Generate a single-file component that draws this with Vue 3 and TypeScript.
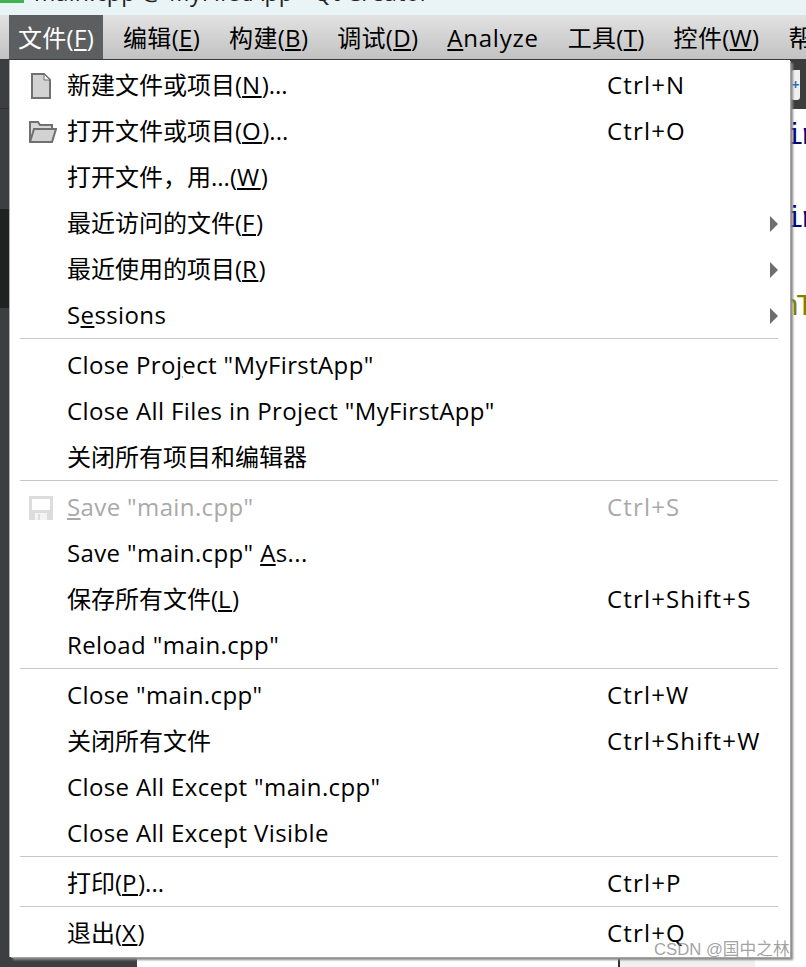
<script setup lang="ts">
type Row = { kind: 'item'; pre: string; key?: string; post?: string; shortcut?: string; icon?: string; arrow?: boolean; disabled?: boolean } | { kind: 'sep' }
const menus = [
  { pre: '文件(', key: 'F', post: ')', active: true },
  { pre: '编辑(', key: 'E', post: ')' },
  { pre: '构建(', key: 'B', post: ')' },
  { pre: '调试(', key: 'D', post: ')' },
  { pre: '', key: 'A', post: 'nalyze' },
  { pre: '工具(', key: 'T', post: ')' },
  { pre: '控件(', key: 'W', post: ')' },
  { pre: '帮助(', key: 'H', post: ')' },
]
const rows: Row[] = [
  { kind: 'item', pre: '新建文件或项目(', key: 'N', post: ')...', shortcut: 'Ctrl+N', icon: 'file' },
  { kind: 'item', pre: '打开文件或项目(', key: 'O', post: ')...', shortcut: 'Ctrl+O', icon: 'folder' },
  { kind: 'item', pre: '打开文件，用...(', key: 'W', post: ')' },
  { kind: 'item', pre: '最近访问的文件(', key: 'F', post: ')', arrow: true },
  { kind: 'item', pre: '最近使用的项目(', key: 'R', post: ')', arrow: true },
  { kind: 'item', pre: 'S', key: 'e', post: 'ssions', arrow: true },
  { kind: 'sep' },
  { kind: 'item', pre: 'Close Pro', key: 'j', post: 'ect "MyFirstApp"' },
  { kind: 'item', pre: 'Close All Files in Project "MyFirstApp"' },
  { kind: 'item', pre: '关闭所有项目和编辑器' },
  { kind: 'sep' },
  { kind: 'item', pre: '', key: 'S', post: 'ave "main.cpp"', shortcut: 'Ctrl+S', icon: 'save', disabled: true },
  { kind: 'item', pre: 'Save "main.cpp" ', key: 'A', post: 's...' },
  { kind: 'item', pre: '保存所有文件(', key: 'L', post: ')', shortcut: 'Ctrl+Shift+S' },
  { kind: 'item', pre: 'Reload "main.cpp"' },
  { kind: 'sep' },
  { kind: 'item', pre: 'Close "main.cpp"', shortcut: 'Ctrl+W' },
  { kind: 'item', pre: '关闭所有文件', shortcut: 'Ctrl+Shift+W' },
  { kind: 'item', pre: 'Close All Except "main.cpp"' },
  { kind: 'item', pre: 'Close All Except Visible' },
  { kind: 'sep' },
  { kind: 'item', pre: '打印(', key: 'P', post: ')...', shortcut: 'Ctrl+P' },
  { kind: 'sep' },
  { kind: 'item', pre: '退出(', key: 'X', post: ')', shortcut: 'Ctrl+Q' },
]
const isLatin = (s: string) => /^[\x00-\x7f]*$/.test(s)
</script>

<template>
  <div class="window">
    <header class="titlebar">
      <span class="appicon"></span>
      <span class="title">main.cpp @ MyFirstApp - Qt Creator</span>
    </header>
    <nav class="menubar">
      <span v-for="m in menus" :key="m.key" class="menu-title" :class="{ active: m.active, latin: isLatin(m.pre + m.post) }">{{ m.pre }}<u>{{ m.key }}</u>{{ m.post }}</span>
    </nav>
    <div class="workspace">
      <aside class="side">
        <div class="side-a"></div>
        <div class="side-c"></div>
        <div class="side-b"></div>
        <div class="side-d"></div>
      </aside>
      <main class="editor">
        <div class="tabs">
          <div class="tab"><span class="plus">+</span></div>
        </div>
        <div class="code">
          <div class="code-line l1">ir</div>
          <div class="code-line l2">ir</div>
          <div class="code-line l3">nT</div>
        </div>
        <div class="statusbar"><span class="status-cell"></span></div>
      </main>
    </div>

    <div class="dropdown">
      <template v-for="(r, i) in rows" :key="i">
        <div v-if="r.kind === 'sep'" class="sep"></div>
        <div v-else class="row" :class="{ disabled: r.disabled }">
          <span class="icon">
            <svg v-if="r.icon === 'file'" width="22" height="28" viewBox="-1 0 22 28">
              <path d="M2 2H14L20 8V26H2Z" fill="#d2d2d2" stroke="#707070" stroke-width="2" />
              <path d="M14 2V8H20Z" fill="#f0f0f0" stroke="#707070" stroke-width="1" />
            </svg>
            <svg v-else-if="r.icon === 'folder'" width="28" height="24" viewBox="0 0 28 24">
              <path d="M1 22V2H9L11 5H23V9" fill="#d8d8d8" stroke="#707070" stroke-width="2" />
              <path d="M1 22L5 9H27L23 22Z" fill="#d2d2d2" stroke="#707070" stroke-width="2" />
            </svg>
            <svg v-else-if="r.icon === 'save'" width="24" height="24" viewBox="0 0 24 24">
              <path d="M0 0H24V24H0Z" fill="#dcdcdc" />
              <path d="M3 3H21V14H3Z" fill="#fff" />
              <path d="M6 17H18V24H6Z" fill="#f4f4f4" />
              <path d="M9 18H11V24H9Z" fill="#dcdcdc" />
            </svg>
          </span>
          <span class="label" :class="{ latin: isLatin(r.pre + (r.post ?? '')) }">{{ r.pre }}<u v-if="r.key">{{ r.key }}</u>{{ r.post }}</span>
          <span v-if="r.shortcut" class="shortcut">{{ r.shortcut }}</span>
          <span v-if="r.arrow" class="arrow"></span>
        </div>
      </template>
    </div>
    <div class="watermark">CSDN @国中之林</div>
  </div>
</template>

<style>
html, body { margin: 0; padding: 0; background: #fff; }
</style>

<style scoped>
.window {
  width: 806px;
  height: 967px;
  position: relative;
  overflow: hidden;
  display: flex;
  flex-direction: column;
  font-family: "Open Sans", "Noto Sans CJK SC", sans-serif;
  font-size: 24px;
  color: #000;
}
.titlebar {
  height: 15px;
  flex: none;
  background: #e9f4f7;
  display: flex;
  align-items: flex-start;
  overflow: hidden;
}
.appicon {
  width: 24px;
  height: 3px;
  background: #3fb34f;
  flex: none;
}
.title {
  margin-left: 10px;
  margin-top: -23px;
  line-height: 30px;
  height: 30px;
  white-space: nowrap;
  color: #222;
  font-size: 23px;
  letter-spacing: 0.3px;
  flex: none;
}
.menubar {
  height: 44px;
  flex: none;
  display: flex;
  padding-left: 9px;
  background: linear-gradient(#e2e2e2, #c2c2c2);
  border-bottom: 1px solid #3a3a3a;
  overflow: hidden;
  white-space: nowrap;
}
.menu-title {
  padding: 0 9px;
  margin-right: 11px;
  line-height: 46px;
  height: 44px;
  flex: none;
  letter-spacing: 0.3px;
}
.menu-title.latin { letter-spacing: 0.75px; }
.menu-title.active {
  background: #5d5e60;
  color: #fff;
}
.workspace {
  flex: 1;
  display: flex;
  min-height: 0;
}
.side {
  width: 137px;
  flex: none;
  display: flex;
  flex-direction: column;
  background: #3d3e40;
}
.side-a { height: 48px; flex: none; border-bottom: 1px solid #2e2e30; }
.side-c { height: 100px; flex: none; }
.side-b { height: 99px; background: #202221; flex: none; }
.side-d { flex: 1; }
.editor {
  flex: 1;
  display: flex;
  flex-direction: column;
  background: #fff;
  min-width: 0;
}
.tabs {
  height: 49px;
  flex: none;
  background: #3c3c3c;
  display: flex;
  justify-content: flex-end;
}
.tab {
  width: 9px;
  height: 30px;
  background: #f0f0f0;
  margin-right: 6px;
  margin-top: 10px;
  border-radius: 3px 0 3px 3px;
}
.plus {
  color: #2a72b5;
  font-weight: 700;
  font-size: 14px;
  line-height: 30px;
  display: block;
  text-align: center;
}
.code {
  flex: 1;
  position: relative;
  font-family: "Liberation Mono", monospace;
  font-size: 30px;
}
.code-line {
  position: absolute;
  left: 648px;
  letter-spacing: -3px;
  color: #00007f;
  line-height: 30px;
  white-space: nowrap;
}
.l1 { top: 12px; }
.l2 { top: 95px; }
.l3 { top: 183px; left: 644px; color: #7f7f00; }
.statusbar {
  height: 10px;
  flex: none;
  display: flex;
  padding-left: 481px;
}
.status-cell {
  width: 135px;
  border-left: 2px solid #333;
  background: #f0f0f0;
}
.dropdown {
  position: absolute;
  left: 10px;
  top: 60px;
  width: 780px;
  height: 897px;
  box-sizing: border-box;
  padding-top: 2px;
  background: #fff;
  box-shadow: 1px 1px 0 #a6a6a6, 3px 3px 2px #8a8a8a, -1px 0 0 #b0b0b0;
}
.row {
  height: 46px;
  display: flex;
  align-items: center;
  position: relative;
  white-space: nowrap;
  line-height: 46px;
}
.row.disabled { color: #a9a9a9; }
.icon {
  position: absolute;
  left: 19px;
  top: 1px;
  height: 46px;
  width: 30px;
  display: flex;
  align-items: center;
}
.icon svg { display: block; }
.label { margin-left: 57px; }
.label u { letter-spacing: 1.5px; }
.label.latin { letter-spacing: 0.38px; }
.label.latin u { letter-spacing: 0.38px; }
.shortcut {
  position: absolute;
  left: 597px;
  letter-spacing: 1.15px;
}
.arrow {
  position: absolute;
  left: 760px;
  top: 16px;
  width: 0;
  height: 0;
  border-left: 8px solid #6e6e6e;
  border-top: 8px solid transparent;
  border-bottom: 8px solid transparent;
}
.sep {
  height: 1px;
  background: #c8c8c8;
  margin: 0 12px 3px 10px;
}
.watermark {
  position: absolute;
  left: 654px;
  top: 939px;
  font-size: 16.7px;
  line-height: 22px;
  color: rgba(120, 120, 120, 0.7);
  font-family: "Liberation Sans", "Noto Sans CJK SC", sans-serif;
  white-space: nowrap;
}
</style>
